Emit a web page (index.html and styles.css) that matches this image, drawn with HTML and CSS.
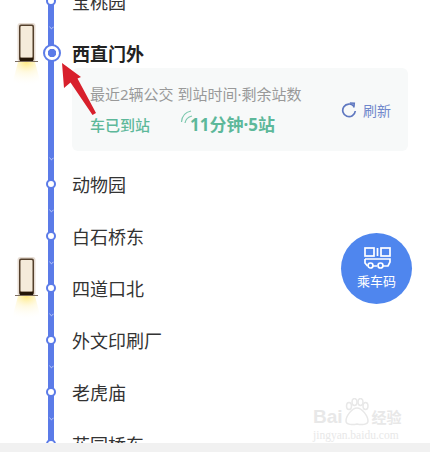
FILE: index.html
```html
<!DOCTYPE html>
<html lang="zh-CN">
<head>
  <meta charset="UTF-8">
  <meta name="viewport" content="width=device-width, initial-scale=1.0">
  <title>西直门外</title>
  <link rel="stylesheet" href="styles.css">
</head>
<body>

<div class="screen">
  <div class="route">
    <div class="stop"><div class="rail"><span class="dot"></span></div><div class="name">宝桃园</div></div>

    <div class="stop stop-current">
      <div class="rail">
        <svg class="chevron" viewBox="0 0 6 4"><path d="M0.5 0.5 L3 3 L5.5 0.5"/></svg>
        <span class="dot-current"></span>
      </div>
      <div class="stop-body">
        <div class="name name-current">西直门外</div>
        <div class="card">
          <div class="card-info">
            <div class="card-title">最近2辆公交 到站时间·剩余站数</div>
            <div class="card-status">
              <span class="arrived">车已到站</span>
              <span class="eta">
                <svg class="signal" viewBox="0 0 15 15"><path d="M1.5 12 C2 6 6 2 11 1"/><path d="M5 13 C5.500 10 8 7 12 6"/></svg>
                11分钟·5站
              </span>
            </div>
          </div>
          <div class="refresh">
            <svg class="refresh-icon" viewBox="0 0 16 16"><path d="M12.800 4.200 A6.300 6.300 0 1 0 14.300 9"/><path d="M8.800 1 L13.200 1.200 L12.800 5.500"/></svg>
            刷新
          </div>
        </div>
      </div>
    </div>

    <div class="stop"><div class="rail"><svg class="chevron" viewBox="0 0 6 4"><path d="M0.5 0.5 L3 3 L5.5 0.5"/></svg><span class="dot"></span></div><div class="name">动物园</div></div>
    <div class="stop"><div class="rail"><svg class="chevron" viewBox="0 0 6 4"><path d="M0.5 0.5 L3 3 L5.5 0.5"/></svg><span class="dot"></span></div><div class="name">白石桥东</div></div>
    <div class="stop"><div class="rail"><svg class="chevron" viewBox="0 0 6 4"><path d="M0.5 0.5 L3 3 L5.5 0.5"/></svg><span class="dot"></span></div><div class="name">四道口北</div></div>
    <div class="stop"><div class="rail"><svg class="chevron" viewBox="0 0 6 4"><path d="M0.5 0.5 L3 3 L5.5 0.5"/></svg><span class="dot"></span></div><div class="name">外文印刷厂</div></div>
    <div class="stop"><div class="rail"><svg class="chevron" viewBox="0 0 6 4"><path d="M0.5 0.5 L3 3 L5.5 0.5"/></svg><span class="dot"></span></div><div class="name">老虎庙</div></div>
    <div class="stop"><div class="rail"><svg class="chevron" viewBox="0 0 6 4"><path d="M0.5 0.5 L3 3 L5.5 0.5"/></svg><span class="dot"></span></div><div class="name">花园桥东</div></div>
  </div>

  <!-- buses sit on top of the route -->
  <svg class="bus bus-one" viewBox="0 0 30 62">
    <defs>
      <radialGradient id="glow" cx="50%" cy="0%" r="100%">
        <stop offset="0%" stop-color="#ffe97f"/>
        <stop offset="45%" stop-color="#fff6cf" stop-opacity="0.6"/>
        <stop offset="100%" stop-color="#fffdf4" stop-opacity="0"/>
      </radialGradient>
    </defs>
    <path d="M7 39 H24 L30 62 H1 Z" fill="url(#glow)"/>
    <rect x="6.500" y="0" width="18" height="39" rx="3" fill="#b89c80" opacity="0.35"/>
    <rect x="8" y="1.500" width="15" height="36.500" rx="2" fill="#54402c"/>
    <rect x="9.500" y="3" width="12" height="31.500" rx="1" fill="#f5ebda"/>
    <rect x="4" y="38" width="23" height="1" fill="#7d6e60"/>
    <rect x="9" y="35" width="13" height="3" fill="#241608"/>
  </svg>
  <svg class="bus bus-two" viewBox="0 0 30 62">
    <path d="M7 39 H24 L30 62 H1 Z" fill="url(#glow)"/>
    <rect x="6.500" y="0" width="18" height="39" rx="3" fill="#b89c80" opacity="0.35"/>
    <rect x="8" y="1.500" width="15" height="36.500" rx="2" fill="#54402c"/>
    <rect x="9.500" y="3" width="12" height="31.500" rx="1" fill="#f5ebda"/>
    <rect x="4" y="38" width="23" height="1" fill="#7d6e60"/>
    <rect x="9" y="35" width="13" height="3" fill="#241608"/>
  </svg>

  <!-- red annotation arrow -->
  <svg class="arrow" viewBox="0 0 40 60">
    <path d="M1 2 L20 16 L16.500 17.500 L35 52 L31.500 54 L9.500 21.500 L3 27 Z" fill="#d8202c"/>
  </svg>

  <div class="ride-btn">
    <svg class="ride-icon" viewBox="0 0 30 22">
      <rect x="3" y="1" width="9" height="8"/>
      <rect x="19" y="1" width="9" height="8"/>
      <path d="M15.500 1 V9"/>
      <path d="M3 12 H28 V15 L26 19 H21 M15 19 H11 M5.500 19 L3 16 V12"/>
      <circle cx="8.500" cy="18.500" r="2.500"/>
      <circle cx="18.500" cy="18.500" r="2.500"/>
    </svg>
    <span>乘车码</span>
  </div>

  <div class="watermark">
    <div class="wm-logo">
      <span class="wm-bai">Bai</span>
      <svg class="wm-paw" viewBox="0 0 28 28">
        <ellipse cx="6" cy="8" rx="2.500" ry="3.500"/>
        <ellipse cx="11.500" cy="4" rx="2.500" ry="3.500"/>
        <ellipse cx="17.500" cy="4" rx="2.500" ry="3.500"/>
        <ellipse cx="22.500" cy="8" rx="2.500" ry="3.500"/>
        <path d="M14 10 C9 10 3 18 3 23 C3 27 10 27 14 26 C18 27 25 27 25 23 C25 18 19 10 14 10 Z"/>
      </svg>
      <span class="wm-jy">经验</span>
    </div>
    <div class="wm-url">jingyan.baidu.com</div>
  </div>

  <div class="bottom-bar"></div>
</div>

</body>
</html>
```

FILE: styles.css
```css
body {
  margin: 0;
  padding: 0;
  background-color: #fff;
  font-family: "Noto Sans", "Noto Sans CJK SC", sans-serif;
}
.screen {
  position: relative;
  width: 430px;
  height: 452px;
  overflow: hidden;
}
.route {
  margin-top: -25px;
  padding-left: 42px;
}
.stop {
  display: flex;
  height: 52px;
  align-items: stretch;
}
.rail {
  position: relative;
  flex: none;
  width: 18px;
  margin-right: 12px;
  display: flex;
  flex-direction: column;
  align-items: center;
  justify-content: center;
  background: linear-gradient(#5b7be8, #5b7be8) center / 6px 100% no-repeat;
}
.chevron {
  position: absolute;
  top: -1px;
  left: 6.500px;
  width: 5px;
  height: 4px;
  fill: none;
  stroke: #d4dcfa;
  stroke-width: 1;
}
.dot {
  width: 6px;
  height: 6px;
  border: 2px solid #5b7be8;
  border-radius: 50%;
  background-color: #fff;
}
.name {
  display: flex;
  align-items: center;
  font-size: 18px;
  color: #333;
}
.stop-current {
  height: 131px;
}
.stop-current .rail {
  justify-content: flex-start;
}
.dot-current {
  box-sizing: border-box;
  flex: none;
  width: 18px;
  height: 18px;
  margin: 17px 0 0 2px;
  border: 2px solid #5b7be8;
  border-radius: 50%;
  background: radial-gradient(circle, #5b7be8 0, #5b7be8 4px, #fff 4.500px);
}
.stop-body {
  flex: 1;
}
.name-current {
  height: 24px;
  margin-top: 14px;
  font-weight: bold;
  color: #222;
}
.card {
  display: flex;
  justify-content: space-between;
  align-items: center;
  box-sizing: border-box;
  width: 336px;
  height: 83px;
  margin-top: 3px;
  padding: 0 17px 0 18px;
  background-color: #f7f9f9;
  border-radius: 6px;
}
.card-title {
  font-size: 15px;
  line-height: 20px;
  color: #999;
  white-space: nowrap;
}
.card-status {
  display: flex;
  align-items: center;
  margin-top: 10px;
  line-height: 22px;
  color: #5db89a;
}
.arrived {
  width: 100px;
  font-size: 15px;
  font-weight: 500;
}
.eta {
  position: relative;
  font-size: 17px;
  font-weight: bold;
  white-space: nowrap;
}
.signal {
  position: absolute;
  left: -10px;
  top: -4px;
  width: 15px;
  height: 15px;
  fill: none;
  stroke: #7cc8ae;
  stroke-width: 1.200;
}
.refresh {
  display: flex;
  align-items: center;
  gap: 6px;
  font-size: 14px;
  color: #7088cc;
}
.refresh-icon {
  width: 16px;
  height: 16px;
  fill: none;
  stroke: #5f78c0;
  stroke-width: 1.700;
}
.bus {
  position: absolute;
  left: 11px;
  width: 30px;
  height: 62px;
}
.bus-one {
  top: 23px;
}
.bus-two {
  top: 257px;
}
.arrow {
  position: absolute;
  left: 61px;
  top: 61px;
  width: 40px;
  height: 60px;
}
.ride-btn {
  position: absolute;
  left: 341px;
  top: 233px;
  width: 71px;
  height: 71px;
  border-radius: 50%;
  background-color: #4f86ee;
  display: flex;
  flex-direction: column;
  align-items: center;
  color: #fff;
  font-size: 13px;
  line-height: 18px;
}
.ride-icon {
  width: 30px;
  height: 22px;
  margin-top: 14px;
  margin-bottom: 3px;
  fill: none;
  stroke: #fff;
  stroke-width: 1.700;
}
.watermark {
  position: absolute;
  left: 313px;
  top: 398px;
  width: 92px;
  color: #e8e8e8;
}
.wm-logo {
  display: flex;
  align-items: flex-end;
  height: 28px;
  white-space: nowrap;
}
.wm-bai {
  font-family: "Liberation Sans", sans-serif;
  font-size: 19px;
  font-weight: bold;
  line-height: 18px;
}
.wm-jy {
  font-family: "Noto Sans CJK SC", sans-serif;
  font-size: 15px;
  font-weight: bold;
  line-height: 18px;
}
.wm-paw {
  flex: none;
  width: 28px;
  height: 28px;
  margin-right: 1px;
  fill: none;
  stroke: #e8e8e8;
  stroke-width: 1.500;
}
.wm-url {
  margin-top: 3px;
  font-family: "Liberation Serif", serif;
  font-size: 11.500px;
  line-height: 12px;
  white-space: nowrap;
}
.bottom-bar {
  position: absolute;
  left: 0;
  right: 0;
  bottom: 0;
  height: 9px;
  background-color: #f1f1f1;
}
```
